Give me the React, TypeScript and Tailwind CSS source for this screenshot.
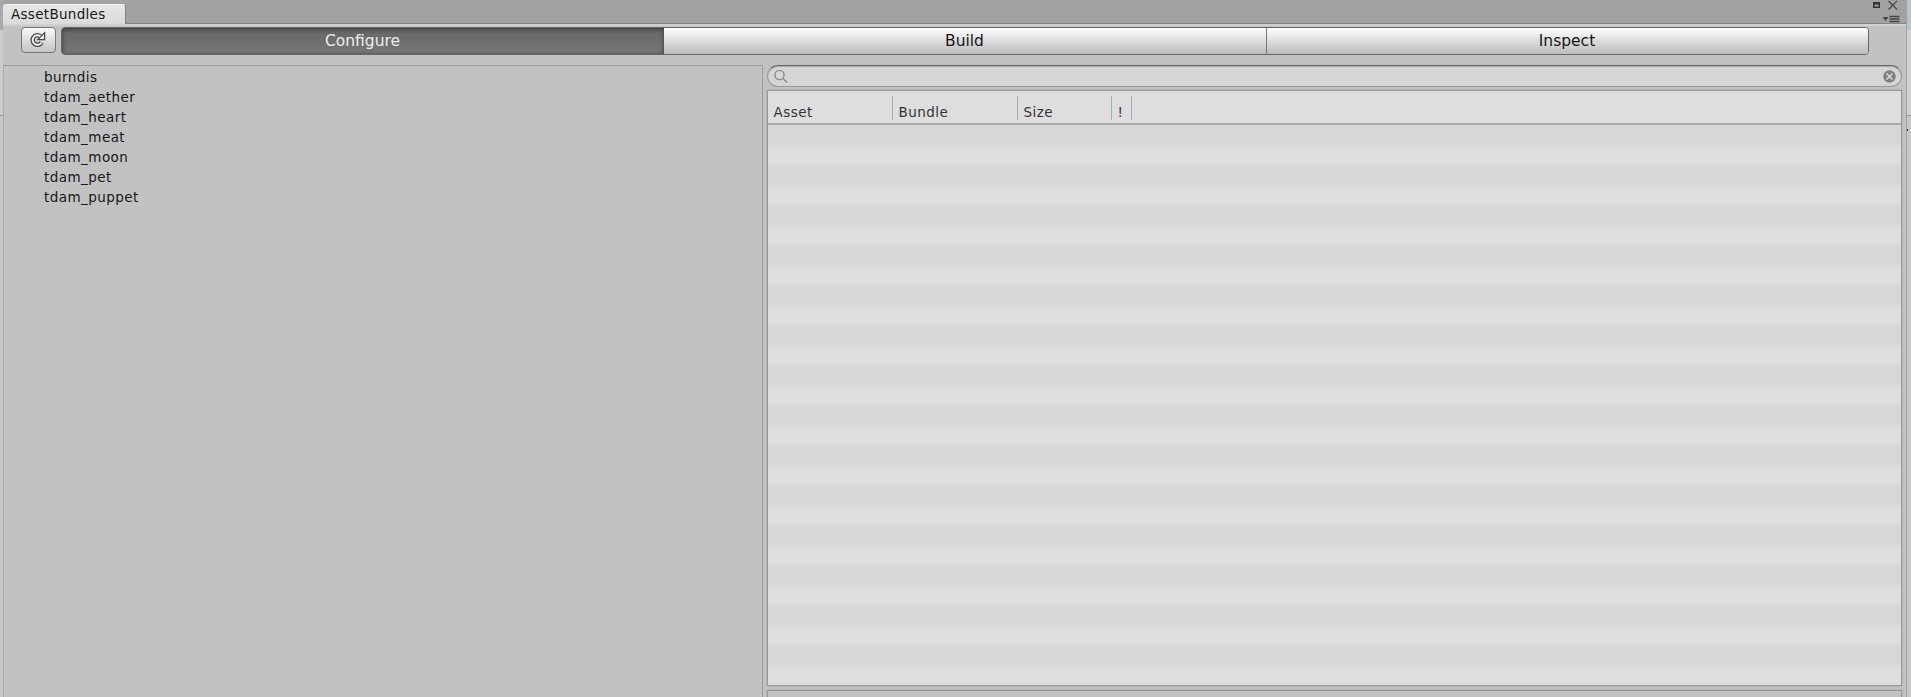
import React from "react";

const bundles = ["burndis", "tdam_aether", "tdam_heart", "tdam_meat", "tdam_moon", "tdam_pet", "tdam_puppet"];
const columns = [
  { label: "Asset", width: "w-[125px]" },
  { label: "Bundle", width: "w-[125px]" },
  { label: "Size", width: "w-[94px]" },
  { label: "!", width: "w-5" },
];
const rows = Array.from({ length: 28 }, (_, i) => i);

function Refresh() {
  const d = "M12.6 11.4A4.8 4.8 0 1 1 11.4 5.2";
  return (
    <svg width="18" height="18" viewBox="0 0 18 18" fill="none">
      <path d={d} stroke="#484848" strokeWidth="4.6" />
      <path d="M15.6 1.8V8.6H8.8Z" fill="#f2f2f2" stroke="#484848" strokeWidth="1.3" />
      <path d={d} stroke="#efefef" strokeWidth="2" />
    </svg>
  );
}

export default function App() {
  return (
    <div className="flex h-[697px] w-[1911px] overflow-hidden bg-[#c2c2c2] font-['DejaVu_Sans',sans-serif] text-[13.5px] text-[#161616]">
      <div className="w-[3px] shrink-0 bg-[#c6c6c6]">
        <div className="h-[30px] bg-[#a3abb1]" />
        <div className="h-[86px] border-b border-[#999] bg-[#cbcbcb]" />
      </div>
      <div className="flex w-[1903px] shrink-0 flex-col">
        <header className="flex h-6 shrink-0 justify-between border-b border-[#828282] bg-[#a2a2a2]">
          <div className="mt-1 h-5 w-[123px] rounded-t-[3px] border-t border-r border-t-[#f0f0f0] border-r-[#808080] bg-linear-to-b from-[#e6e6e6] to-[#dadada] pl-2 leading-[19px] tracking-[0.3px]">AssetBundles</div>
          <svg width="32" height="23" viewBox="0 0 32 23" fill="none" className="mr-[6px]">
            <path d="M5 2h7v6H5zM6.5 4.5v2h4v-2z" fill="#333" fillRule="evenodd" />
            <path d="M20.5 1l8.5 8.5m0-8.5l-8.5 8.5" stroke="#4a4a4a" strokeWidth="1.3" />
            <path d="M14.5 17h6l-3 4z" fill="#444" />
            <path d="M21.5 16.5h10M21.5 19h10M21.5 21.5h10" stroke="#444" strokeWidth="1.3" />
          </svg>
        </header>
        <div className="flex h-[41px] shrink-0 border-t-2 border-[#d0d0d0] pl-[17.5px]">
          <button className="mt-px mr-[5px] flex h-[26px] w-[35px] items-center justify-center rounded-[4px] border border-[#777] bg-linear-to-b from-[#f8f8f8] to-[#c4c4c4]"><Refresh /></button>
          <div className="mt-px flex h-[28px] w-[1808px] overflow-hidden rounded-[4px] border border-[#666] text-[15.5px]">
            <button className="flex w-[602px] items-center justify-center bg-linear-to-b from-[#666] to-[#777] pt-px text-[#eee] shadow-[inset_0_1px_4px_#333]">Configure</button>
            <button className="flex w-[603px] items-center justify-center border-r border-[#777] bg-linear-to-b from-white to-[#bdbbbd] pt-px">Build</button>
            <button className="flex w-[601px] items-center justify-center bg-linear-to-b from-white to-[#bdbbbd] pt-px">Inspect</button>
          </div>
        </div>
        <main className="flex h-[632px]">
          <aside className="h-full w-[760px] border-x border-t border-[#9c9c9c] border-l-[#aaa] pt-px pl-[40px]">
            {bundles.map((b) => <div key={b} className="h-5 leading-5 tracking-[0.45px]">{b}</div>)}
          </aside>
          <section className="ml-1 w-[1135px]">
            <div className="flex h-[22px] items-center justify-between rounded-full border border-[#999] border-t-[#666] bg-[#d6d6d6] px-[5px] shadow-[inset_0_1px_1px_#aaa]">
              <svg width="15" height="15" viewBox="0 0 15 15" fill="none" stroke="#888" strokeWidth="1.4"><circle cx="6.5" cy="6" r="4.6" /><path d="M10 9.5l4 4" /></svg>
              <svg width="13" height="13" viewBox="0 0 13 13"><circle cx="6.5" cy="6.5" r="6.2" fill="#808080" /><path d="M3.5 3.5l6 6m0-6l-6 6" stroke="#ddd" strokeWidth="1.5" /></svg>
            </div>
            <div className="mt-[3px] h-[596px] overflow-hidden border border-[#999] bg-[#dedede] shadow-[0_0_0_0.5px_#aaa]">
              <div className="flex h-[34px] border-b-2 border-[#aaa]">
                {columns.map((c) => <div key={c.label} className={`${c.width} mt-[5px] h-6 border-r border-[#aaa] pt-[6px] pl-[5.5px] leading-5 tracking-[0.45px] text-[#333]`}>{c.label}</div>)}
              </div>
              {rows.map((i) => <div key={i} className={i % 2 === 0 ? "h-5 bg-[#d7d7d7]" : "h-5 bg-[#dedede]"} />)}
            </div>
            <div className="mt-1 h-5 border border-[#999] shadow-[0_0_0_0.5px_#aaa]" />
          </section>
        </main>
      </div>
      <div className="w-[5px] shrink-0 border-l border-[#a0a0a0] bg-[#c6c6c6]">
        <div className="h-[30px] bg-[#bcc4ca]" />
        <div className="h-[86px] border-b border-[#999] bg-[#d2d2d2]" />
        <div className="mt-[13px] h-[2px] w-px bg-[#222]" />
      </div>
    </div>
  );
}
